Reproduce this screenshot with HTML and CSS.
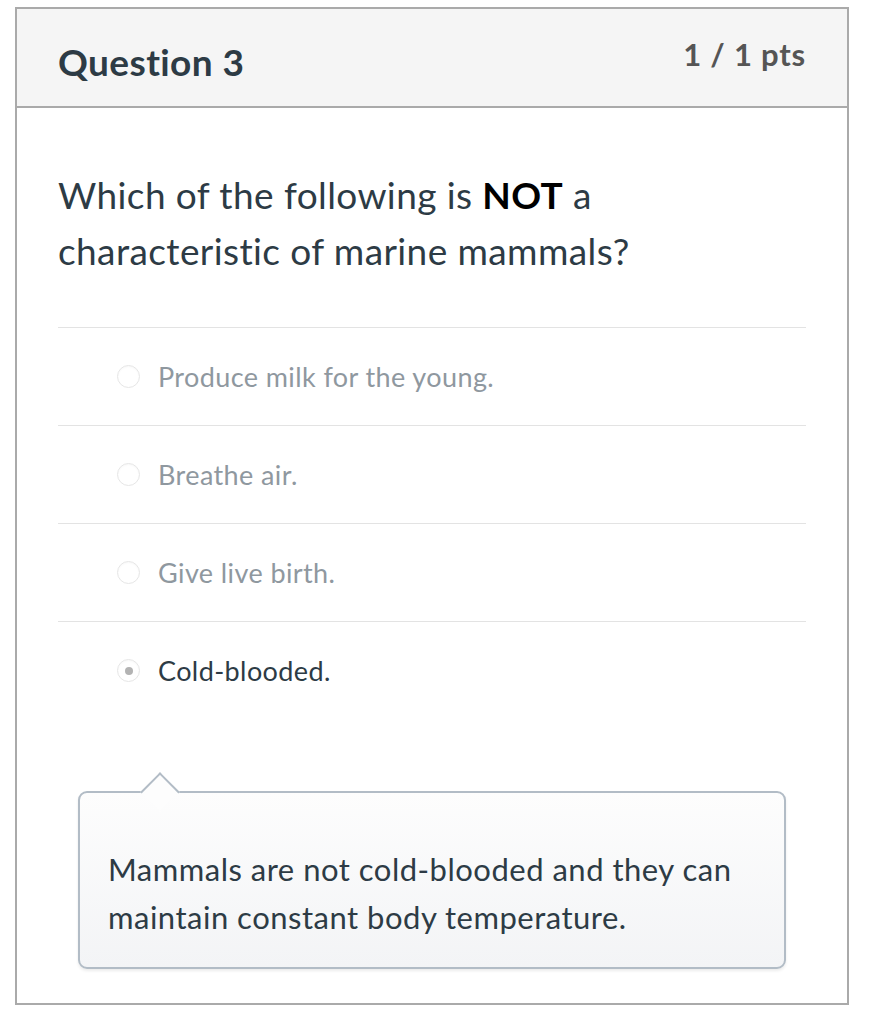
FILE: index.html
```html
<!DOCTYPE html>
<html>
<head>
<meta charset="utf-8">
<link rel="stylesheet" href="styles.css">
</head>
<body>
<div class="question">
  <div class="header">
    <h2 class="title">Question 3</h2>
    <div class="pts">1 / 1 pts</div>
  </div>
  <div class="content">
    <p class="prompt">Which of the following is <strong>NOT</strong> a characteristic of marine mammals?</p>
    <div class="answers">
      <div class="answer"><span class="radio"></span><span class="label">Produce milk for the young.</span></div>
      <div class="answer"><span class="radio"></span><span class="label">Breathe air.</span></div>
      <div class="answer"><span class="radio"></span><span class="label">Give live birth.</span></div>
      <div class="answer selected"><span class="radio"><span class="dot"></span></span><span class="label">Cold-blooded.</span></div>
    </div>
    <div class="comment">
      <span class="arrow"></span>
      <p class="comment-text">Mammals are not cold-blooded and they can maintain constant body temperature.</p>
    </div>
  </div>
</div>
</body>
</html>
```
FILE: styles.css
```css
html, body {
  margin: 0;
  padding: 0;
  background: #fff;
}
body {
  font-family: Lato, "Open Sans", sans-serif;
  color: #2d3b45;
}
.question {
  margin: 7px 0 0 15px;
  width: 830px;
  height: 994px;
  border: 2px solid #aaaaaa;
  display: flex;
  flex-direction: column;
}
.header {
  height: 97px;
  background: #f5f5f5;
  border-bottom: 2px solid #aaaaaa;
  display: flex;
  justify-content: space-between;
  align-items: flex-start;
  padding: 0 41px;
}
.title {
  margin: 31px 0 0 0;
  font-size: 37px;
  line-height: 44px;
  font-weight: 700;
  letter-spacing: 0.4px;
  color: #2d3b45;
}
.pts {
  margin-top: 25px;
  font-size: 31px;
  line-height: 40px;
  font-weight: 700;
  letter-spacing: 0.8px;
  color: #555555;
}
.content {
  padding: 0 41px;
  display: flex;
  flex-direction: column;
}
.prompt {
  margin: 59px 0 48px 0;
  font-size: 37px;
  line-height: 56px;
  letter-spacing: 0.4px;
  color: #2d3b45;
}
.prompt strong {
  color: #000;
  font-weight: 700;
}
.answer {
  height: 97px;
  border-top: 1px solid #e3e3e3;
  display: flex;
  align-items: center;
  padding-left: 59px;
  gap: 18px;
}
.radio {
  width: 21px;
  height: 21px;
  border: 1px solid #e6e6e6;
  border-radius: 50%;
  background: #fff;
  display: flex;
  align-items: center;
  justify-content: center;
  box-shadow: inset 0 1px 2px rgba(0,0,0,0.03);
}
.dot {
  width: 8px;
  height: 8px;
  border-radius: 50%;
  background: #b3b3b3;
}
.label {
  font-size: 27px;
  letter-spacing: 0.4px;
  color: #8f989f;
}
.selected .label {
  color: #2d3b45;
}
.comment {
  position: relative;
  margin: 72px 20px 0 20px;
  border: 2px solid #b2bcc6;
  border-radius: 9px;
  background: linear-gradient(#fdfdfd, #f3f4f6);
  box-shadow: 0 2px 3px rgba(0,0,0,0.08);
  padding: 52px 28px 26px 28px;
}
.arrow {
  position: absolute;
  top: -15px;
  left: 66px;
  width: 26px;
  height: 26px;
  background: #fdfdfd;
  border-top: 2px solid #b2bcc6;
  border-left: 2px solid #b2bcc6;
  transform: rotate(45deg);
}
.comment-text {
  margin: 0;
  font-size: 31px;
  line-height: 48px;
  letter-spacing: 0.5px;
  color: #2d3b45;
}
```
